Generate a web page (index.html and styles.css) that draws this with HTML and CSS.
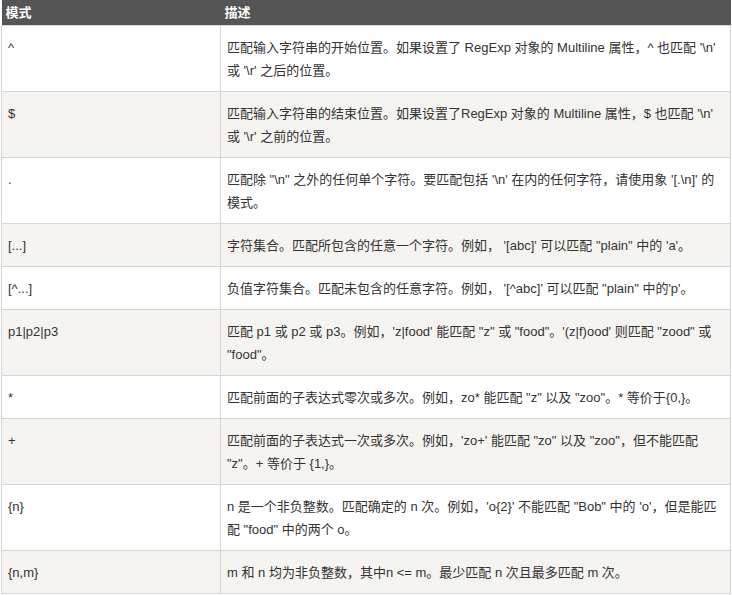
FILE: index.html
```html
<!DOCTYPE html>
<html lang="zh">
<head>
<meta charset="utf-8">
<title>正则表达式</title>
<link rel="stylesheet" href="styles.css">
</head>
<body>
<table class="ref">
  <thead>
    <tr><th class="c1">模式</th><th class="c2">描述</th></tr>
  </thead>
  <tbody>
    <tr><td>^</td><td>匹配输入字符串的开始位置。如果设置了 RegExp 对象的 Multiline 属性，^ 也匹配 '\n'<br>或 '\r' 之后的位置。</td></tr>
    <tr><td>$</td><td>匹配输入字符串的结束位置。如果设置了RegExp 对象的 Multiline 属性，$ 也匹配 '\n'<br>或 '\r' 之前的位置。</td></tr>
    <tr><td>.</td><td>匹配除 "\n" 之外的任何单个字符。要匹配包括 '\n' 在内的任何字符，请使用象 '[.\n]' 的<br>模式。</td></tr>
    <tr><td>[...]</td><td>字符集合。匹配所包含的任意一个字符。例如， '[abc]' 可以匹配 "plain" 中的 'a'。</td></tr>
    <tr><td>[^...]</td><td>负值字符集合。匹配未包含的任意字符。例如， '[^abc]' 可以匹配 "plain" 中的'p'。</td></tr>
    <tr><td>p1|p2|p3</td><td>匹配 p1 或 p2 或 p3。例如，'z|food' 能匹配 "z" 或 "food"。'(z|f)ood' 则匹配 "zood" 或<br>"food"。</td></tr>
    <tr><td>*</td><td>匹配前面的子表达式零次或多次。例如，zo* 能匹配 "z" 以及 "zoo"。* 等价于{0,}。</td></tr>
    <tr><td>+</td><td>匹配前面的子表达式一次或多次。例如，'zo+' 能匹配 "zo" 以及 "zoo"，但不能匹配<br>"z"。+ 等价于 {1,}。</td></tr>
    <tr><td>{n}</td><td>n 是一个非负整数。匹配确定的 n 次。例如，'o{2}' 不能匹配 "Bob" 中的 'o'，但是能匹<br>配 "food" 中的两个 o。</td></tr>
    <tr><td>{n,m}</td><td>m 和 n 均为非负整数，其中n &lt;= m。最少匹配 n 次且最多匹配 m 次。</td></tr>
  </tbody>
</table>
</body>
</html>
```
FILE: styles.css
```css
html, body {
  margin: 0;
  padding: 0;
  background: #ffffff;
}
body {
  padding-left: 1px;
  font-family: "Liberation Sans", "Noto Sans CJK SC", sans-serif;
  font-size: 13px;
  color: #333333;
}
.ref {
  width: 730px;
  border-collapse: collapse;
  table-layout: fixed;
}
.ref th {
  background: #555555;
  color: #ffffff;
  font-weight: bold;
  text-align: left;
  height: 25px;
  padding: 0 4px;
  line-height: 25px;
  border: none;
}
.ref .c1 {
  width: 211px;
}
.ref td {
  border: 1px solid #d6d6d6;
  padding: 10px 6px 9px 6px;
  line-height: 23px;
  vertical-align: top;
  white-space: nowrap;
}
.ref tbody tr:nth-child(even) td {
  background: #f6f4f0;
}
```
